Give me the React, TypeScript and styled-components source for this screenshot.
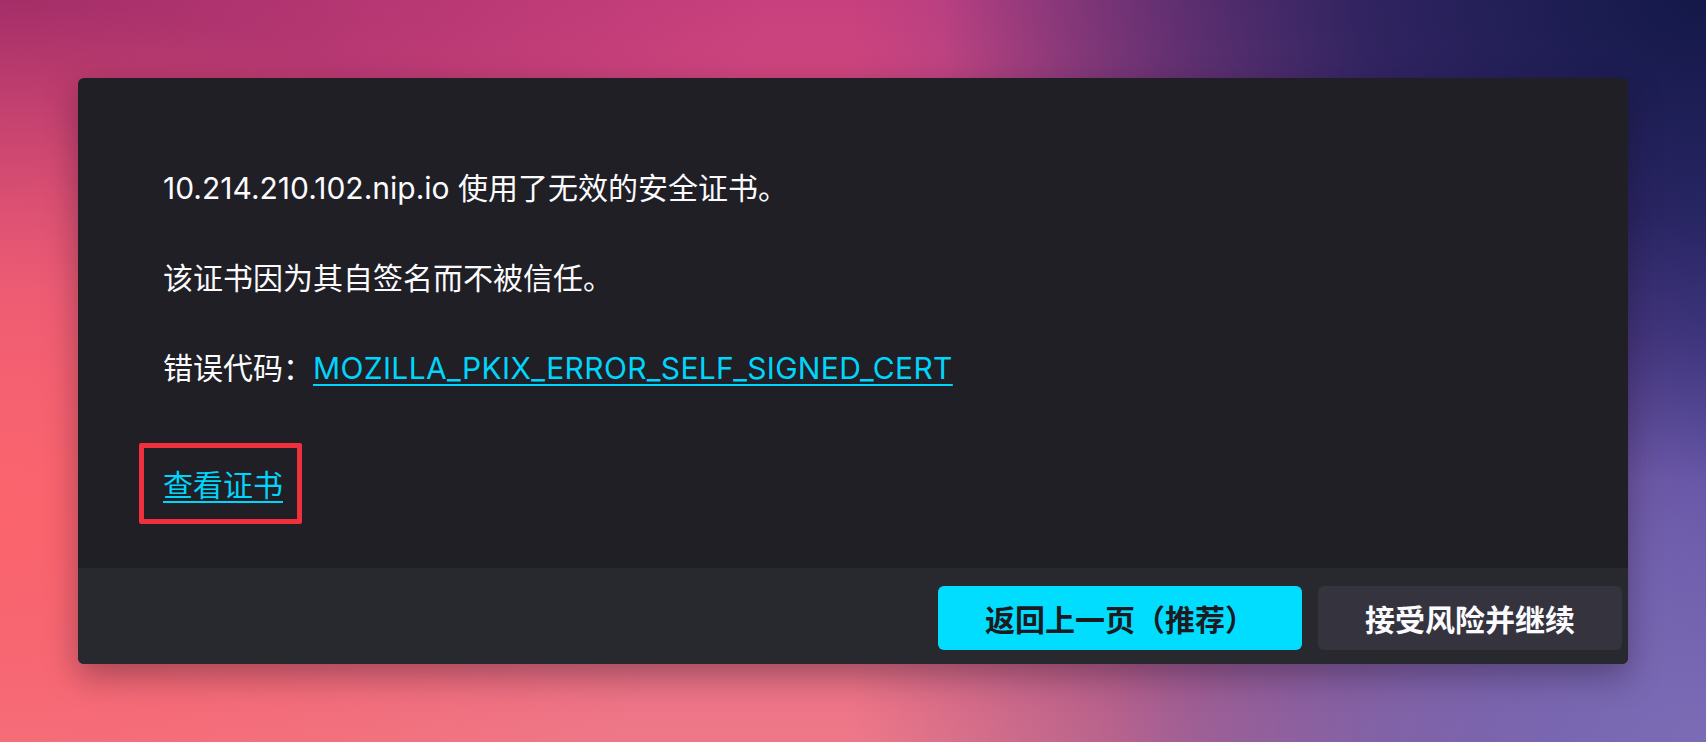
import React from "react";
import styled, { createGlobalStyle } from "styled-components";

const GlobalStyle = createGlobalStyle`
  html, body { margin: 0; padding: 0; }
  body {
    font-family: Inter, "Noto Sans CJK SC", sans-serif;
    background: #c84a82;
  }
  * { box-sizing: border-box; }
`;

const Page = styled.div`
  width: 100vw;
  height: 100vh;
  padding: 78px;
  display: flex;
  background:
    radial-gradient(ellipse 45% 65% at 100% 0%, #141848 0%, rgba(24, 26, 80, 0.75) 45%, rgba(30, 30, 90, 0) 100%),
    radial-gradient(ellipse 35% 55% at 100% 100%, #7c6cb6 0%, rgba(124, 108, 182, 0.6) 50%, rgba(124, 108, 182, 0) 100%),
    linear-gradient(90deg, rgba(70, 70, 160, 0) 50%, rgba(80, 60, 150, 0.45) 70%, rgba(72, 70, 160, 0.9) 100%),
    radial-gradient(ellipse 40% 70% at 0% 70%, #fb646c 0%, rgba(251, 100, 108, 0) 100%),
    radial-gradient(ellipse 45% 40% at 0% 0%, #a42e68 0%, rgba(164, 46, 104, 0) 100%),
    linear-gradient(180deg, #c8407e 0%, #e2567c 50%, #ee7888 100%);
`;

const Card = styled.section`
  flex: 1;
  display: flex;
  flex-direction: column;
  background: #1f1f25;
  border-radius: 6px;
  overflow: hidden;
  box-shadow: 0 12px 32px rgba(20, 10, 30, 0.35);
`;

const Content = styled.div`
  flex: 1;
  padding: 88px 85px 0;
  color: #fbfbfe;
  font-size: 30px;
  line-height: 45px;
`;

const Para = styled.p`
  margin: 0 0 45px;
`;

const CodeLink = styled.a<{ $spaced?: boolean }>`
  color: #00d5fb;
  text-decoration: underline;
  text-decoration-thickness: 2px;
  text-underline-offset: 5px;
  letter-spacing: ${(p) => (p.$spaced ? "0.34px" : "0")};
`;

const CertRow = styled.div`
  margin-top: 72px;
`;

const Highlight = styled.span`
  position: relative;
  display: inline-block;
  &::after {
    content: "";
    position: absolute;
    left: -24px;
    right: -19px;
    top: -20px;
    bottom: -16px;
    border: 5px solid #f0303c;
    border-radius: 2px;
  }
`;

const Footer = styled.footer`
  height: 96px;
  background: #28282f;
  display: flex;
  justify-content: flex-end;
  align-items: flex-start;
  gap: 16px;
  padding: 18px 6px 0 0;
`;

const Button = styled.button<{ $primary?: boolean }>`
  height: 64px;
  padding: 0 47px;
  border: none;
  border-radius: 6px;
  font-family: Inter, "Noto Sans CJK SC", sans-serif;
  font-size: 30px;
  font-weight: 700;
  background: ${(p) => (p.$primary ? "#00ddff" : "#35343e")};
  color: ${(p) => (p.$primary ? "#1c1b22" : "#fbfbfe")};
  cursor: pointer;
`;

export default function App() {
  return (
    <>
      <GlobalStyle />
      <Page>
        <Card>
          <Content>
            <Para>10.214.210.102.nip.io 使用了无效的安全证书。</Para>
            <Para>该证书因为其自签名而不被信任。</Para>
            <Para>
              错误代码：<CodeLink href="#" $spaced>MOZILLA_PKIX_ERROR_SELF_SIGNED_CERT</CodeLink>
            </Para>
            <CertRow>
              <Highlight>
                <CodeLink href="#">查看证书</CodeLink>
              </Highlight>
            </CertRow>
          </Content>
          <Footer>
            <Button $primary>返回上一页（推荐）</Button>
            <Button>接受风险并继续</Button>
          </Footer>
        </Card>
      </Page>
    </>
  );
}
